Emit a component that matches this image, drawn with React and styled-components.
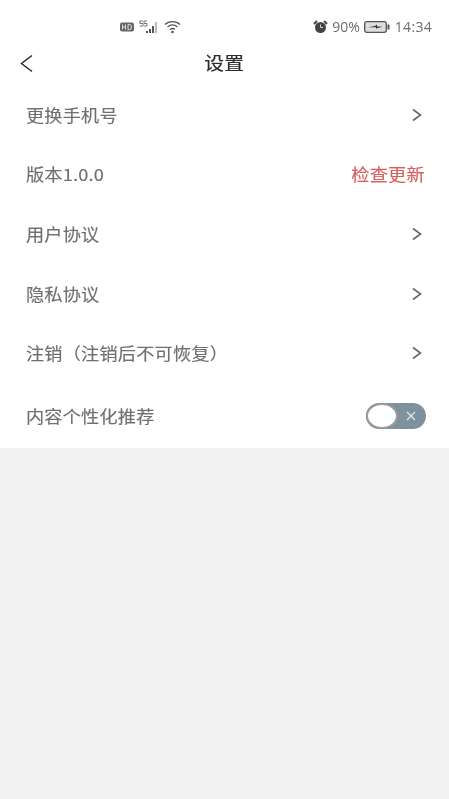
import React from "react";
import styled, { createGlobalStyle } from "styled-components";

const Global = createGlobalStyle`
  html, body { margin: 0; padding: 0; background: #f1f1f1; }
  body { font-family: "Noto Sans CJK SC", "Liberation Sans", sans-serif; }
`;
const Page = styled.div`
  width: 449px; height: 799px; background: #f1f1f1; overflow: hidden;
  display: flex; flex-direction: column;
`;
const Top = styled.div`
  background: #fff; height: 448px; display: flex; flex-direction: column;
`;
const StatusBar = styled.div`
  height: 40px; padding: 18px 17px 0 120px; box-sizing: border-box;
  display: flex; align-items: flex-start; justify-content: space-between;
`;
const StatusGroup = styled.div`
  display: flex; align-items: center; height: 18px; gap: ${p => p.$gap || 3}px;
`;
const StatusText = styled.span`
  font-family: "Open Sans", "Liberation Sans", sans-serif;
  font-size: 14px; color: #6e6e6e; line-height: 18px; letter-spacing: ${p => p.$track || 0}px;
  margin-left: ${p => p.$offset || 0}px;
  filter: blur(0.45px);
`;
const Blurry = styled.svg`
  display: block; filter: blur(0.5px); flex: none;
`;
const Header = styled.div`
  height: 45px; display: flex; align-items: center; position: relative;
  justify-content: center;
`;
const BackButton = styled.svg`
  position: absolute; left: 20px; top: 14px;
`;
const Title = styled.div`
  font-size: 18px; color: #2c2c2c; line-height: 45px; letter-spacing: 0.2px;
  transform: scaleX(1.1); filter: blur(0.4px); -webkit-text-stroke: 0.2px #2c2c2c;
`;
const List = styled.div`
  display: flex; flex-direction: column;
`;
const Row = styled.div`
  height: 59.6px; padding: 0 24px 0 26px; display: flex; align-items: center;
  justify-content: space-between;
  margin-top: ${p => p.$shift || 0}px;
`;
const Label = styled.span`
  display: inline-block; font-size: 16.5px; color: #6f6f6f; letter-spacing: 0.2px;
  filter: blur(0.45px); line-height: 20px; white-space: nowrap;
  transform: scaleX(1.1); transform-origin: left center;
  -webkit-text-stroke: 0.15px #6f6f6f;
`;
const Update = styled(Label)`
  color: #d4605c; -webkit-text-stroke: 0.15px #d4605c;
  transform-origin: right center;
`;
const Chevron = styled.svg`
  display: block; margin-right: 3px; filter: blur(0.3px);
`;
const Switch = styled.div`
  width: 60px; height: 26px; border-radius: 13px; background: #7e919f; position: relative;
  margin-right: -1px; filter: blur(0.45px);
`;
const Knob = styled.div`
  position: absolute; left: 0; top: 0; width: 32px; height: 26px; border-radius: 50%;
  box-sizing: border-box; background: #fff; border: 2px solid #9a9a9a;
`;
const Cross = styled.svg`
  position: absolute; right: 10px; top: 8px;
`;

const Arrow = () => (
  <Chevron width="10" height="14" viewBox="0 0 10 14" fill="none">
    <path d="M1 1.500 L8.500 7 L1 12.500" stroke="#666" strokeWidth="1.600" />
  </Chevron>
);

export default function App() {
  return (
    <Page>
      <Global />
      <Top>
        <StatusBar>
          <StatusGroup $gap={5}>
            <Blurry width="14" height="10" viewBox="0 0 14 10">
              <rect x="0" y="0.500" width="14" height="9" rx="2" fill="#666" />
              <path d="M2.500 2.500v5M2.500 5h3M5.500 2.500v5M8 2.500v5h1.500a2 2.500 0 0 0 0-5z" stroke="#ddd" strokeWidth="1" fill="none" />
            </Blurry>
            <Blurry width="20" height="14" viewBox="0 0 20 14">
              <path d="M4 1H0.800V3.500H4V6H0.800M8 1H5V3.500H8V6H5" stroke="#666" strokeWidth="0.900" fill="none" />
              <rect x="7" y="11" width="2" height="2" fill="#555" />
              <rect x="10" y="9" width="2" height="4" fill="#555" />
              <rect x="13" y="6" width="2" height="7" fill="#555" />
              <rect x="16" y="2" width="2" height="11" fill="#bbb" />
            </Blurry>
            <Blurry width="18" height="14" viewBox="0 0 18 14" fill="none">
              <path d="M1 4.500C5 0.700 12 0.700 16 4.500" stroke="#555" strokeWidth="1.300" />
              <path d="M3.500 7C6.500 4.500 10.500 4.500 13.500 7" stroke="#555" strokeWidth="1.300" />
              <path d="M6 9.500C7.500 8.300 9.500 8.300 11 9.500" stroke="#555" strokeWidth="1.300" />
              <circle cx="8.500" cy="12" r="1.300" fill="#555" />
            </Blurry>
          </StatusGroup>
          <StatusGroup $gap={4}>
            <Blurry width="15" height="14" viewBox="0 0 15 14">
              <circle cx="7.500" cy="7.500" r="5.500" fill="#444" />
              <path d="M1 4 L4 1 M14 4 L11 1" stroke="#444" strokeWidth="2" />
              <path d="M7.500 4.500V7.500H10" stroke="#ccc" strokeWidth="1" fill="none" />
            </Blurry>
            <StatusText>90%</StatusText>
            <Blurry width="26" height="12" viewBox="0 0 26 12">
              <rect x="0.700" y="0.700" width="21.600" height="10.600" rx="2" fill="#dedede" stroke="#555" strokeWidth="1.300" />
              <path d="M4 6.300L11 5L13 3.500V5.500L18.500 5.700L12 7.500V6.300z" fill="#333" />
              <rect x="23.500" y="3.500" width="2" height="5" fill="#555" />
            </Blurry>
            <StatusText $offset={1} $track={0.3}>14:34</StatusText>
          </StatusGroup>
        </StatusBar>
        <Header>
          <BackButton width="14" height="20" viewBox="0 0 14 20" fill="none">
            <path d="M12 1.500 L1.500 9.500 L12 17.500" stroke="#2a2a2a" strokeWidth="1.500" />
          </BackButton>
          <Title>设置</Title>
        </Header>
        <List>
          <Row><Label>更换手机号</Label><Arrow /></Row>
          <Row><Label>版本1.0.0</Label><Update>检查更新</Update></Row>
          <Row><Label>用户协议</Label><Arrow /></Row>
          <Row><Label>隐私协议</Label><Arrow /></Row>
          <Row><Label>注销（注销后不可恢复）</Label><Arrow /></Row>
          <Row $shift={3}>
            <Label>内容个性化推荐</Label>
            <Switch>
              <Knob />
              <Cross width="10" height="10" viewBox="0 0 10 10">
                <path d="M1 1L9 9M9 1L1 9" stroke="#e4e8eb" strokeWidth="1.200" />
              </Cross>
            </Switch>
          </Row>
        </List>
      </Top>
    </Page>
  );
}
